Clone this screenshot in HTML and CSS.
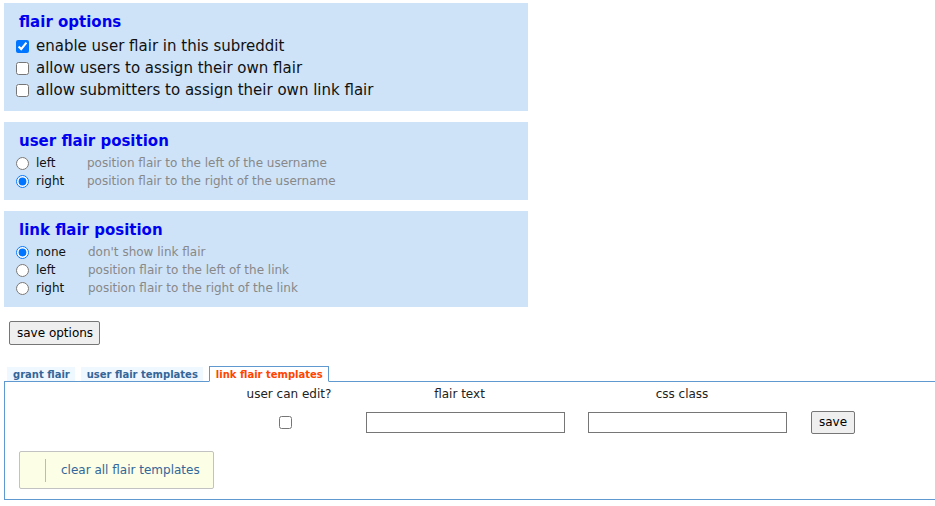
FILE: index.html
```html
<!DOCTYPE html>
<html lang="en">
<head>
<meta charset="utf-8">
<title>flair settings</title>
<link rel="stylesheet" href="styles.css">
</head>
<body>
<div class="page">
  <section class="panel">
    <h2 class="panel-title">flair options</h2>
    <label class="check-row"><input type="checkbox" class="check" checked><span>enable user flair in this subreddit</span></label>
    <label class="check-row"><input type="checkbox" class="check"><span>allow users to assign their own flair</span></label>
    <label class="check-row"><input type="checkbox" class="check"><span>allow submitters to assign their own link flair</span></label>
  </section>

  <section class="panel">
    <h2 class="panel-title">user flair position</h2>
    <label class="radio-row"><input type="radio" class="radio" name="ufp"><span class="opt opt-user">left</span><span class="desc">position flair to the left of the username</span></label>
    <label class="radio-row"><input type="radio" class="radio" name="ufp" checked><span class="opt opt-user">right</span><span class="desc">position flair to the right of the username</span></label>
  </section>

  <section class="panel">
    <h2 class="panel-title">link flair position</h2>
    <label class="radio-row"><input type="radio" class="radio" name="lfp" checked><span class="opt opt-link">none</span><span class="desc">don't show link flair</span></label>
    <label class="radio-row"><input type="radio" class="radio" name="lfp"><span class="opt opt-link">left</span><span class="desc">position flair to the left of the link</span></label>
    <label class="radio-row"><input type="radio" class="radio" name="lfp"><span class="opt opt-link">right</span><span class="desc">position flair to the right of the link</span></label>
  </section>

  <button class="btn save-options" type="button">save options</button>

  <nav class="tabs">
    <a class="tab">grant flair</a>
    <a class="tab">user flair templates</a>
    <a class="tab tab-selected">link flair templates</a>
  </nav>
  <div class="tab-box">
    <div class="tpl-grid">
      <div class="th">user can edit?</div>
      <div class="th th-field">flair text</div>
      <div class="th th-field">css class</div>
      <div class="th"></div>
      <input type="checkbox" class="check tpl-check">
      <input type="text" class="field">
      <input type="text" class="field">
      <button class="btn tpl-save" type="button">save</button>
    </div>
    <div class="clear-box"><span class="clear-sep"></span><span class="clear-text">clear all flair templates</span></div>
  </div>
</div>
</body>
</html>
```
FILE: styles.css
```css
html, body {
  margin: 0;
  padding: 0;
  background: #fff;
  overflow: hidden;
}
body {
  font-family: "DejaVu Sans", Verdana, sans-serif;
  color: #000;
}
.page {
  padding: 3px 0 0 4px;
}
.panel {
  width: 524px;
  box-sizing: border-box;
  background: #cee3f8;
  padding: 8px 0 10px 0;
  margin-bottom: 11px;
}
.panel-title {
  margin: 0 0 2px 15px;
  font-size: 15px;
  line-height: 23px;
  height: 22px;
  font-weight: bold;
  color: #0000f0;
}
.check-row {
  display: flex;
  align-items: center;
  height: 22px;
  padding-left: 12px;
  font-size: 15px;
  line-height: 22px;
  color: #111;
}
.check {
  width: 13px;
  height: 13px;
  margin: 0 7px 0 0;
}
.radio-row {
  display: flex;
  align-items: center;
  height: 18px;
  padding-left: 12px;
  font-size: 12px;
  line-height: 18px;
}
.radio {
  width: 13px;
  height: 13px;
  margin: 0 7px 0 0;
}
.opt {
  color: #111;
}
.opt-user { width: 51px; }
.opt-link { width: 52px; }
.desc {
  color: #888;
}
.btn {
  font-family: "DejaVu Sans", Verdana, sans-serif;
  font-size: 12px;
  line-height: 15px;
  color: #000;
  background: #efefef;
  border: 1px solid #767676;
  border-radius: 2px;
  padding: 3px 7px;
}
.save-options {
  display: block;
  margin: 14px 0 0 5px;
  height: 24px;
  padding: 3px 6px 3px 7px;
}
.tabs {
  display: flex;
  align-items: flex-end;
  gap: 6px;
  margin: 21px 0 0 3px;
}
.tab {
  font-size: 10px;
  font-weight: bold;
  line-height: 15px;
  height: 14px;
  padding: 0 5px 0 6px;
  background: #eff7ff;
  color: #369;
}
.tab-selected {
  position: relative;
  z-index: 1;
  background: #fff;
  color: #ff4500;
  border: 1px solid #5f99cf;
  border-bottom: 1px solid #fff;
  margin-bottom: -1px;
}
.tab-box {
  width: 960px;
  border: 1px solid #5f99cf;
  padding: 4px 0 10px 0;
}
.tpl-grid {
  display: grid;
  grid-template-columns: 108px 199px 200px auto;
  column-gap: 23px;
  row-gap: 9px;
  align-items: center;
  padding-left: 230px;
}
.th {
  font-size: 12px;
  line-height: 16px;
  color: #222;
  text-align: center;
}
.th-field {
  padding-right: 12px;
}
.tpl-check {
  justify-self: center;
  margin-top: -1px;
}
.field {
  width: 199px;
  height: 21px;
  box-sizing: border-box;
  border: 1px solid #767676;
  padding: 0 2px;
  margin: 0;
  background: #fff;
}
.tpl-save {
  justify-self: start;
  height: 23px;
}
.clear-box {
  display: flex;
  align-items: center;
  width: 195px;
  height: 38px;
  box-sizing: border-box;
  margin: 17px 0 0 14px;
  padding-left: 25px;
  background: #fcfee6;
  border: 1px solid #c2c2c2;
  border-radius: 2px;
}
.clear-sep {
  width: 1px;
  height: 23px;
  background: #bbb;
  margin-right: 15px;
}
.clear-text {
  font-size: 12px;
  color: #369;
}
```
